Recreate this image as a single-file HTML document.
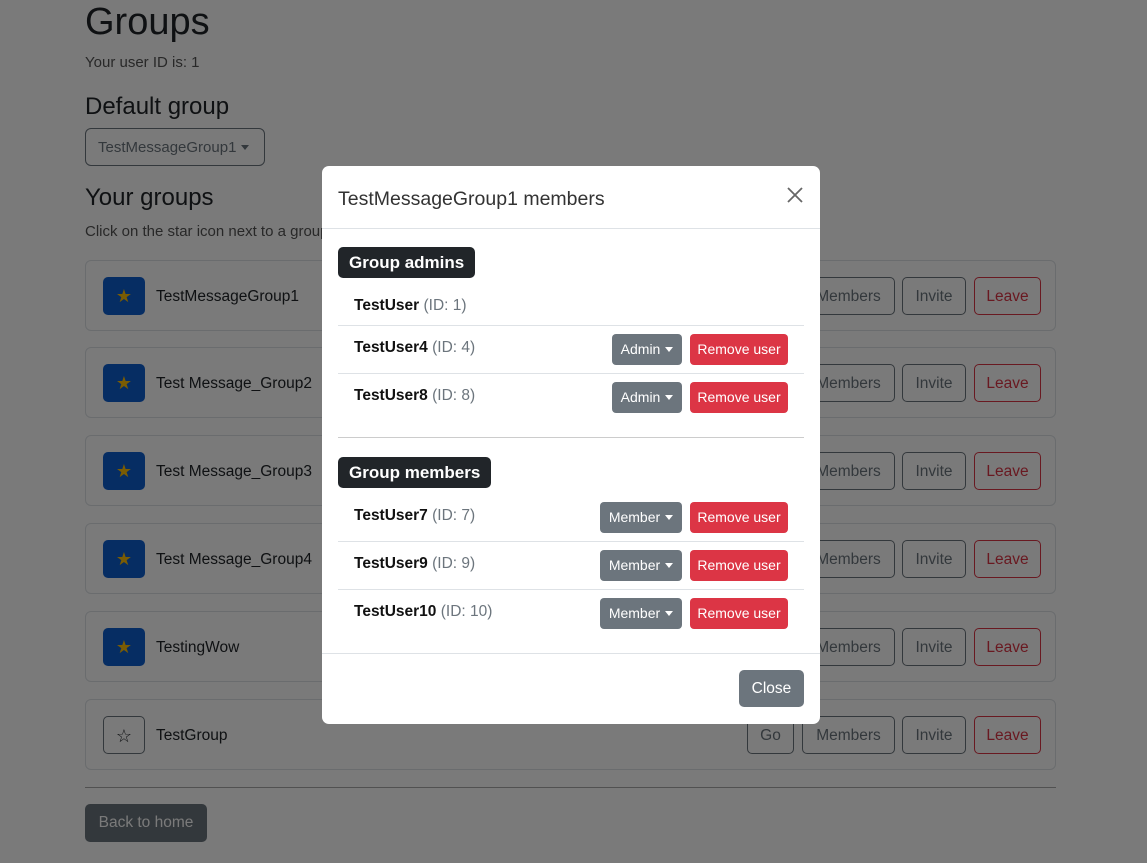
<!DOCTYPE html>
<html><head><style>
*{box-sizing:border-box;margin:0;padding:0}
body{width:1147px;height:863px;overflow:hidden;background:#fff;font-family:"Liberation Sans",sans-serif;color:#212529;font-size:16px;position:relative}
h1{position:absolute;left:85px;top:0;font-size:38px;font-weight:500;line-height:44px}
.uid{position:absolute;left:85px;top:54px;font-size:15px;color:#555}
h2{position:absolute;left:85px;font-size:24px;font-weight:500}
.dd{position:absolute;left:85px;top:128px;width:180px;height:38px;border:1px solid #6c757d;border-radius:6px;color:#6c757d;font-size:15px;padding:10px 12px;white-space:nowrap}
.caret{display:inline-block;border-left:4px solid transparent;border-right:4px solid transparent;border-top:5px solid currentColor;vertical-align:2px;margin-left:5px}
.card{position:absolute;left:85px;width:971px;height:71px;border:1px solid #dee2e6;border-radius:6px}
.star{position:absolute;left:17px;top:16px;width:42px;height:38px;border-radius:5px;background:#0d5fd0;color:#ffc107;text-align:center;line-height:38px;font-size:18px}
.star.o{background:#fff;border:1px solid #6c757d;color:#212529}
.nm{position:absolute;left:70px;top:27px;font-size:15.5px}
.b{position:absolute;top:16px;height:38px;border:1px solid #6c757d;border-radius:5px;color:#6c757d;font-size:15.5px;line-height:38px;text-align:center}
.b.r{border-color:#dc3545;color:#dc3545}
.hr{position:absolute;left:85px;top:787px;width:971px;border-top:1px solid #aaa}
.back{position:absolute;left:85px;top:804px;width:122px;height:38px;background:#6c757d;color:#fff;border-radius:5px;font-size:15.5px;line-height:38px;text-align:center}
.ov{position:absolute;inset:0;background:rgba(0,0,0,.52)}
.m{position:absolute;left:322px;top:166px;width:498px;height:558px;background:#fff;border-radius:7px}
.mh{height:63px;border-bottom:1px solid #dee2e6;padding:22px 16px;font-size:19.5px;color:#333}
.x{position:absolute;right:16px;top:20px;width:18px;height:18px}
.bd{position:absolute;left:16px;height:31px;background:#212529;color:#fff;font-weight:bold;font-size:17px;border-radius:5px;padding:6px 11px}
.row{position:absolute;left:16px;width:466px;height:48px;font-size:15.5px}
.row .t{position:absolute;left:16px;top:13px}
.row b{color:#111}
.t span{color:#6c757d}
.bl{border-bottom:1px solid #dee2e6}
.sb{position:absolute;top:8px;height:31px;border-radius:4px;color:#fff;font-size:14px;line-height:31px;text-align:center;white-space:nowrap}
.g{background:#6c757d}.rd{background:#dc3545;width:98px;right:16px}
.sep{position:absolute;left:16px;top:271px;width:466px;border-top:1px solid #ccc}
.mf{position:absolute;left:0;top:487px;width:498px;border-top:1px solid #dee2e6}
.cl{position:absolute;left:417px;top:504px;width:65px;height:37px;background:#6c757d;color:#fff;border-radius:5px;line-height:37px;text-align:center;font-size:15.5px}
</style></head><body>
<h1>Groups</h1>
<div class="uid">Your user ID is: 1</div>
<h2 style="top:93px">Default group</h2>
<div class="dd">TestMessageGroup1<span class="caret"></span></div>
<h2 style="top:184px">Your groups</h2>
<div class="uid" style="top:223px">Click on the star icon next to a group to set it as your default group.</div>

<div class="card" style="top:260px"><div class="star">★</div><div class="nm">TestMessageGroup1</div><div class="b" style="left:661px;width:47px">Go</div><div class="b" style="left:716px;width:93px">Members</div><div class="b" style="left:816px;width:64px">Invite</div><div class="b r" style="left:888px;width:67px">Leave</div></div>
<div class="card" style="top:347px"><div class="star">★</div><div class="nm">Test Message_Group2</div><div class="b" style="left:661px;width:47px">Go</div><div class="b" style="left:716px;width:93px">Members</div><div class="b" style="left:816px;width:64px">Invite</div><div class="b r" style="left:888px;width:67px">Leave</div></div>
<div class="card" style="top:435px"><div class="star">★</div><div class="nm">Test Message_Group3</div><div class="b" style="left:661px;width:47px">Go</div><div class="b" style="left:716px;width:93px">Members</div><div class="b" style="left:816px;width:64px">Invite</div><div class="b r" style="left:888px;width:67px">Leave</div></div>
<div class="card" style="top:523px"><div class="star">★</div><div class="nm">Test Message_Group4</div><div class="b" style="left:661px;width:47px">Go</div><div class="b" style="left:716px;width:93px">Members</div><div class="b" style="left:816px;width:64px">Invite</div><div class="b r" style="left:888px;width:67px">Leave</div></div>
<div class="card" style="top:611px"><div class="star">★</div><div class="nm">TestingWow</div><div class="b" style="left:661px;width:47px">Go</div><div class="b" style="left:716px;width:93px">Members</div><div class="b" style="left:816px;width:64px">Invite</div><div class="b r" style="left:888px;width:67px">Leave</div></div>
<div class="card" style="top:699px"><div class="star o">☆</div><div class="nm">TestGroup</div><div class="b" style="left:661px;width:47px">Go</div><div class="b" style="left:716px;width:93px">Members</div><div class="b" style="left:816px;width:64px">Invite</div><div class="b r" style="left:888px;width:67px">Leave</div></div>
<div class="hr"></div>
<div class="back">Back to home</div>
<div class="ov"></div>
<div class="m">
<div class="mh">TestMessageGroup1 members</div>
<svg class="x" viewBox="0 0 18 18"><path d="M2 2L16 16M16 2L2 16" stroke="#666" stroke-width="1.8" fill="none"/></svg>
<div class="bd" style="top:81px">Group admins</div>
<div class="row bl" style="top:112px;height:48px"><div class="t" style="top:19px"><b>TestUser</b> <span>(ID: 1)</span></div></div>
<div class="row bl" style="top:160px"><div class="t"><b>TestUser4</b> <span>(ID: 4)</span></div><div class="sb g" style="left:274px;width:70px">Admin<span class="caret"></span></div><div class="sb rd">Remove user</div></div>
<div class="row" style="top:208px"><div class="t"><b>TestUser8</b> <span>(ID: 8)</span></div><div class="sb g" style="left:274px;width:70px">Admin<span class="caret"></span></div><div class="sb rd">Remove user</div></div>
<div class="sep"></div>
<div class="bd" style="top:291px">Group members</div>
<div class="row bl" style="top:328px"><div class="t"><b>TestUser7</b> <span>(ID: 7)</span></div><div class="sb g" style="left:262px;width:82px">Member<span class="caret"></span></div><div class="sb rd">Remove user</div></div>
<div class="row bl" style="top:376px"><div class="t"><b>TestUser9</b> <span>(ID: 9)</span></div><div class="sb g" style="left:262px;width:82px">Member<span class="caret"></span></div><div class="sb rd">Remove user</div></div>
<div class="row" style="top:424px"><div class="t"><b>TestUser10</b> <span>(ID: 10)</span></div><div class="sb g" style="left:262px;width:82px">Member<span class="caret"></span></div><div class="sb rd">Remove user</div></div>
<div class="mf"></div>
<div class="cl">Close</div>
</div>
</body></html>
